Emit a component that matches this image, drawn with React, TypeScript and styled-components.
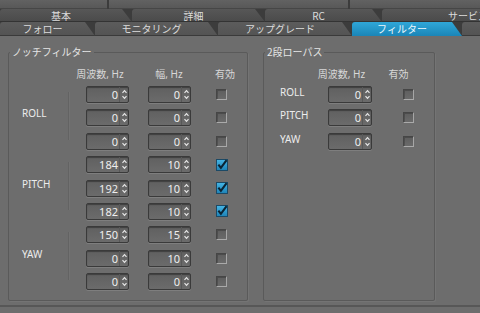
import React, { FC } from 'react';
import styled, { createGlobalStyle, css } from 'styled-components';

const GlobalStyle = createGlobalStyle`
  html, body {
    margin: 0;
    padding: 0;
  }
  body {
    width: 480px;
    height: 313px;
    overflow: hidden;
    background: #6d6d6d;
    font-family: "Noto Sans", "Noto Sans CJK JP", sans-serif;
    color: #e4e4e4;
  }
`;

const Window = styled.div`
  width: 480px;
  height: 313px;
  display: flex;
  flex-direction: column;
  background: #6d6d6d;
  overflow: hidden;
`;

const TabBar = styled.div`
  flex: none;
  height: 36px;
  display: flex;
  flex-direction: column;
  background: #3c3c3c;
`;

const TabRow = styled.div<{ $h: number }>`
  flex: none;
  height: ${(p) => p.$h}px;
  display: flex;
  overflow: hidden;
`;

const HiddenTab = styled.div<{ $w: number }>`
  flex: none;
  width: ${(p) => p.$w}px;
  margin-right: 2px;
  background: linear-gradient(#626262, #585858);
  border-bottom: 1px solid #464646;
`;

const Tab = styled.div<{ $w: number; $active?: boolean; $front?: boolean }>`
  flex: none;
  width: ${(p) => p.$w}px;
  box-sizing: border-box;
  padding-right: 10px;
  display: flex;
  align-items: center;
  justify-content: center;
  font-family: "Noto Sans CJK JP", sans-serif;
  font-size: 10px;
  line-height: 1;
  color: #dcdcdc;
  white-space: nowrap;
  border-top-left-radius: 3px;
  clip-path: polygon(0 0, calc(100% - 10px) 0, 100% 100%, 0 100%);
  background: ${(p) =>
    p.$front ? 'linear-gradient(#5c5c5c, #535353)' : 'linear-gradient(#575757, #4a4a4a)'};
  box-shadow: inset 0 -1px 0 rgba(0, 0, 0, 0.3);
  ${(p) =>
    p.$active &&
    css`
      background: linear-gradient(#2fa7d8, #1a85b7);
      color: #eef8fd;
      box-shadow: none;
    `}
`;

const Body = styled.div`
  flex: none;
  height: 271px;
  display: flex;
  gap: 15px;
  box-sizing: border-box;
  padding: 9px 0 0 8px;
  border-bottom: 2px solid #575757;
`;

const Group = styled.fieldset<{ $w: number }>`
  flex: none;
  width: ${(p) => p.$w}px;
  height: 256px;
  box-sizing: border-box;
  margin: 0;
  padding: 0;
  border: 1px solid #5a5a5a;
  border-radius: 2px;
  box-shadow: 1px 1px 0 rgba(255, 255, 255, 0.05);
`;

const Legend = styled.legend`
  margin-left: 1px;
  padding: 0 2px;
  font-family: "Noto Sans CJK JP", sans-serif;
  font-size: 10px;
  line-height: 14px;
  color: #e6e6e6;
`;

const Inner = styled.div<{ $left: number }>`
  padding: 9px 0 0 ${(p) => p.$left}px;
  display: flex;
  flex-direction: column;
  gap: 6px;
`;

const HeaderRow = styled.div`
  display: flex;
  height: 12px;
`;

const HeaderCell = styled.div<{ $w: number }>`
  flex: none;
  width: ${(p) => p.$w}px;
  text-align: center;
  font-size: 10px;
  line-height: 12px;
  color: #d8d8d8;
  white-space: nowrap;
`;

const Stack = styled.div`
  display: flex;
  flex-direction: column;
  gap: 6.4px;
`;

const AxisGroup = styled.div`
  display: flex;
`;

const AxisLabel = styled.div<{ $w: number }>`
  flex: none;
  width: ${(p) => p.$w}px;
  font-size: 10px;
  line-height: 12px;
  color: #ececec;
`;

const CenterLabel = styled(AxisLabel)`
  align-self: center;
  padding-bottom: 9px;
`;

const TopLabel = styled(AxisLabel)`
  align-self: flex-start;
`;

const Divider = styled.div`
  flex: none;
  width: 1px;
  margin: 6px 17px 10px 0;
  background: #636363;
  box-shadow: 1px 0 0 rgba(255, 255, 255, 0.04);
`;

const Row = styled.div`
  display: flex;
  align-items: center;
  height: 17px;
`;

const SpinBox = styled.div<{ $w: number; $gap: number }>`
  flex: none;
  width: ${(p) => p.$w}px;
  height: 17px;
  margin-right: ${(p) => p.$gap}px;
  box-sizing: border-box;
  display: flex;
  border: 1px solid #3a3a3a;
  border-radius: 2px;
  background: linear-gradient(#606060, #6b6b6b);
  box-shadow: inset 0 1px 1px rgba(0, 0, 0, 0.35), 0 1px 0 rgba(255, 255, 255, 0.12);
`;

const SpinValue = styled.span`
  flex: 1;
  text-align: right;
  padding-right: 1px;
  font-size: 11px;
  line-height: 15px;
  color: #eeeeee;
`;

const SpinArrows = styled.span`
  flex: none;
  width: 8px;
  border-left: 1px solid #585858;
  display: flex;
  align-items: center;
  justify-content: center;
`;

const CheckBox = styled.span`
  flex: none;
  width: 11px;
  height: 11px;
  box-sizing: border-box;
  border: 1px solid;
  border-color: #464646 #a6a6a6 #aaaaaa #464646;
  background: linear-gradient(#5e5e5e, #6a6a6a);
  box-shadow: inset 1px 1px 0 rgba(0, 0, 0, 0.2);
`;

const CheckedWrap = styled.span`
  flex: none;
  width: 12px;
  height: 12px;
  display: flex;
`;

const Arrows: FC = () => (
  <svg width="7" height="13" viewBox="0 0 7 13">
    <path d="M1.5 4.8 L3.5 2.6 L5.5 4.8" fill="none" stroke="#e6e6e6" strokeWidth="1.2" />
    <path d="M1.5 8.2 L3.5 10.4 L5.5 8.2" fill="none" stroke="#e6e6e6" strokeWidth="1.2" />
  </svg>
);

const Spinner: FC<{ value: number; w: number; gap: number }> = ({ value, w, gap }) => (
  <SpinBox $w={w} $gap={gap}>
    <SpinValue>{value}</SpinValue>
    <SpinArrows>
      <Arrows />
    </SpinArrows>
  </SpinBox>
);

const Check: FC<{ on: boolean }> = ({ on }) =>
  on ? (
    <CheckedWrap>
      <svg width="12" height="12" viewBox="0 0 12 12">
        <defs>
          <linearGradient id="cb" x1="0" y1="0" x2="0" y2="1">
            <stop offset="0" stopColor="#46b6e6" />
            <stop offset="1" stopColor="#1d82b6" />
          </linearGradient>
        </defs>
        <rect x="0.5" y="0.5" width="11" height="11" fill="url(#cb)" stroke="#1c4a66" />
        <path d="M2.4 5.6 L4.9 8.8 L10.6 1.2" fill="none" stroke="#0b2434" strokeWidth="2.1" />
      </svg>
    </CheckedWrap>
  ) : (
    <CheckBox />
  );

type NotchRow = [number, number, boolean];

const notch: { axis: string; rows: NotchRow[] }[] = [
  { axis: 'ROLL', rows: [[0, 0, false], [0, 0, false], [0, 0, false]] },
  { axis: 'PITCH', rows: [[184, 10, true], [192, 10, true], [182, 10, true]] },
  { axis: 'YAW', rows: [[150, 15, false], [0, 10, false], [0, 0, false]] },
];

const lowpass: [string, number, boolean][] = [
  ['ROLL', 0, false],
  ['PITCH', 0, false],
  ['YAW', 0, false],
];

const App: FC = () => {
  return (
    <>
      <GlobalStyle />
      <Window>
        <TabBar>
          <TabRow $h={9}>
            <HiddenTab $w={107} />
            <HiddenTab $w={239} />
            <HiddenTab $w={140} />
          </TabRow>
          <TabRow $h={13}>
            <Tab $w={132}>基本</Tab>
            <Tab $w={133}>詳細</Tab>
            <Tab $w={117}>RC</Tab>
            <Tab $w={182}>サービス</Tab>
          </TabRow>
          <TabRow $h={14}>
            <Tab $front $w={95}>フォロー</Tab>
            <Tab $front $w={123}>モニタリング</Tab>
            <Tab $front $w={134}>アップグレード</Tab>
            <Tab $front $active $w={110}>フィルター</Tab>
            <Tab $front $w={110} />
          </TabRow>
        </TabBar>

        <Body>
          <Group $w={240}>
            <Legend>ノッチフィルター</Legend>
            <Inner $left={13}>
              <HeaderRow>
                <HeaderCell $w={48} />
                <HeaderCell $w={60}>周波数, Hz</HeaderCell>
                <HeaderCell $w={78}>幅, Hz</HeaderCell>
                <HeaderCell $w={34}>有効</HeaderCell>
              </HeaderRow>
              <Stack>
                {notch.map((g) => (
                  <AxisGroup key={g.axis}>
                    <CenterLabel $w={46}>{g.axis}</CenterLabel>
                    <Divider />
                    <Stack>
                      {g.rows.map(([freq, width, on], i) => (
                        <Row key={i}>
                          <Spinner value={freq} w={43} gap={19} />
                          <Spinner value={width} w={43} gap={25} />
                          <Check on={on} />
                        </Row>
                      ))}
                    </Stack>
                  </AxisGroup>
                ))}
              </Stack>
            </Inner>
          </Group>

          <Group $w={172}>
            <Legend>2段ローパス</Legend>
            <Inner $left={16}>
              <HeaderRow>
                <HeaderCell $w={36} />
                <HeaderCell $w={51}>周波数, Hz</HeaderCell>
                <HeaderCell $w={63}>有効</HeaderCell>
              </HeaderRow>
              <Stack>
                {lowpass.map(([axis, freq, on]) => (
                  <Row key={axis}>
                    <TopLabel $w={48}>{axis}</TopLabel>
                    <Spinner value={freq} w={44} gap={31} />
                    <Check on={on} />
                  </Row>
                ))}
              </Stack>
            </Inner>
          </Group>
        </Body>
      </Window>
    </>
  );
};

export default App;
